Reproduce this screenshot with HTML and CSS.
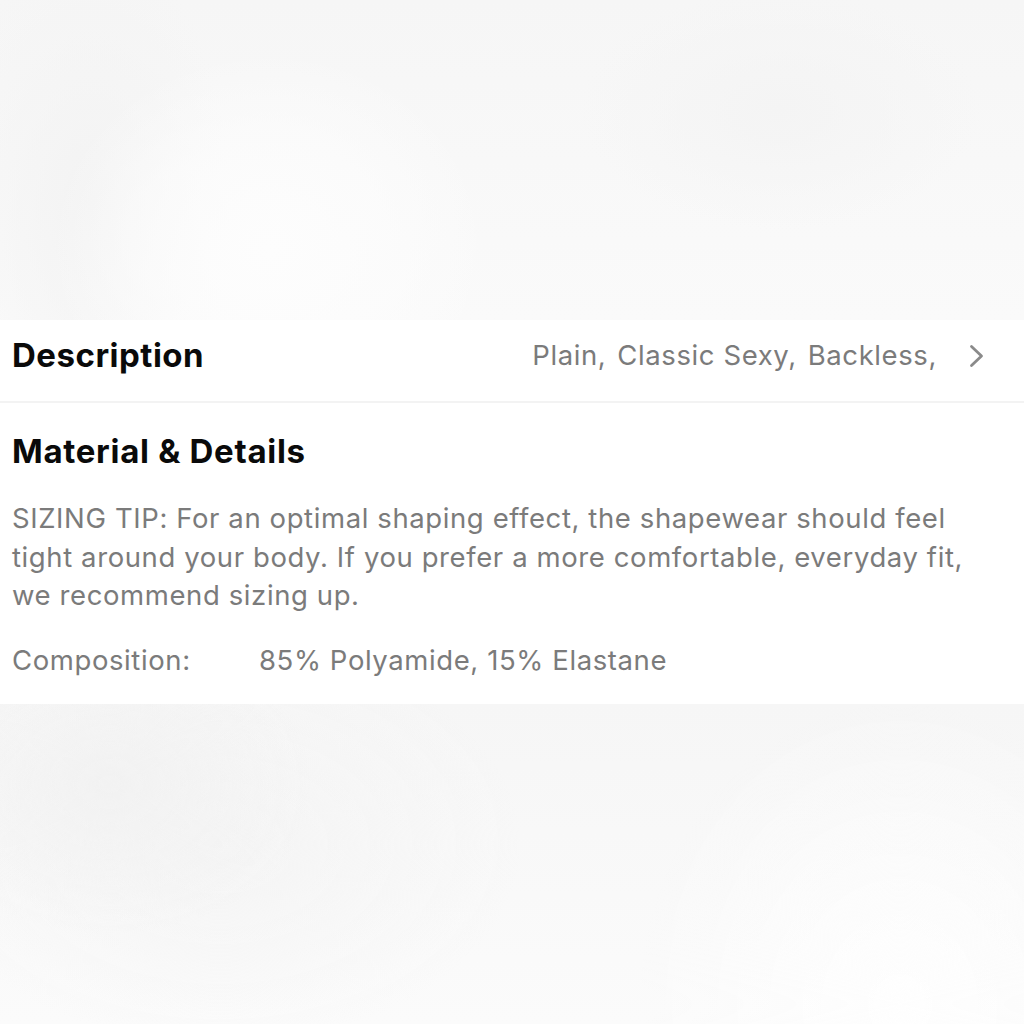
FILE: index.html
```html
<!DOCTYPE html>
<html>
<head>
<meta charset="utf-8">
<link rel="stylesheet" href="styles.css">
</head>
<body>
<div class="page">
  <div class="backdrop backdrop-top"></div>
  <section class="sheet">
    <div class="row-desc">
      <h2 class="title">Description</h2>
      <div class="tags">
        <span>Plain,</span><span>Classic Sexy,</span><span>Backless,</span>
        <svg class="chev" viewBox="0 0 16 24" width="16" height="24"><path d="M2.5 2.5 L12.5 12 L2.5 21.5" fill="none" stroke="#8a8a8a" stroke-width="2.8" stroke-linecap="round" stroke-linejoin="round"/></svg>
      </div>
    </div>
    <div class="details">
      <h2 class="title">Material &amp; Details</h2>
      <p class="tip">SIZING TIP: For an optimal shaping effect, the shapewear should feel tight around your body. If you prefer a more comfortable, everyday fit, we recommend sizing up.</p>
      <div class="comp"><span class="comp-label">Composition:</span><span>85% Polyamide, 15% Elastane</span></div>
    </div>
  </section>
  <div class="backdrop backdrop-bottom"></div>
</div>
</body>
</html>
```
FILE: styles.css
```css
html, body { margin: 0; padding: 0; }
body {
  font-family: Inter, "Noto Sans", "Liberation Sans", sans-serif;
  background: #f8f8f8;
}
.page {
  width: 1024px;
  height: 1024px;
  display: flex;
  flex-direction: column;
  overflow: hidden;
}
.backdrop { flex: none; }
.backdrop-top {
  height: 320px;
  background:
    radial-gradient(ellipse 220px 200px at 270px 250px, #fdfdfd 0%, rgba(253,253,253,0.6) 55%, rgba(253,253,253,0) 100%),
    radial-gradient(ellipse 200px 120px at 780px 110px, #f4f4f4 0%, rgba(244,244,244,0) 100%),
    radial-gradient(ellipse 140px 260px at 90px 200px, #f3f3f3 0%, rgba(243,243,243,0) 100%),
    linear-gradient(180deg, #f6f6f6 0%, #fafafa 100%);
}
.sheet {
  background: #ffffff;
  flex: none;
}
.row-desc {
  height: 83px;
  box-sizing: border-box;
  display: flex;
  align-items: center;
  justify-content: space-between;
  padding: 0 39px 12px 12px;
  border-bottom: 2px solid #f3f3f3;
}
.title {
  margin: 0;
  font-size: 33px;
  font-weight: 700;
  color: #0a0a0a;
  letter-spacing: 0.5px;
  line-height: 40px;
}
.tags {
  display: flex;
  align-items: center;
  gap: 11px;
  font-size: 27.5px;
  letter-spacing: 0.6px;
  color: #7b7b7b;
}
.tags .chev { margin-left: 21px; margin-top: 2px; }
.details {
  padding: 28px 12px 25px 12px;
}
.details .title { letter-spacing: 0.7px; }
.tip {
  margin: 28px 0 0 0;
  font-size: 27.5px;
  letter-spacing: 0.6px;
  line-height: 38.5px;
  color: #7b7b7b;
  max-width: 990px;
}
.comp {
  margin-top: 26px;
  display: flex;
  font-size: 27.5px;
  letter-spacing: 0.6px;
  line-height: 38px;
  color: #7b7b7b;
}
.comp-label { width: 247px; }
.backdrop-bottom {
  flex: 1;
  background:
    radial-gradient(ellipse 200px 150px at 110px 80px, #f2f2f2 0%, rgba(242,242,242,0) 100%),
    radial-gradient(ellipse 300px 200px at 220px 140px, #f5f5f5 0%, rgba(245,245,245,0) 100%),
    radial-gradient(ellipse 260px 300px at 900px 300px, #fefefe 0%, rgba(254,254,254,0) 100%),
    linear-gradient(180deg, #f6f6f6 0%, #fbfbfb 100%);
}
```
